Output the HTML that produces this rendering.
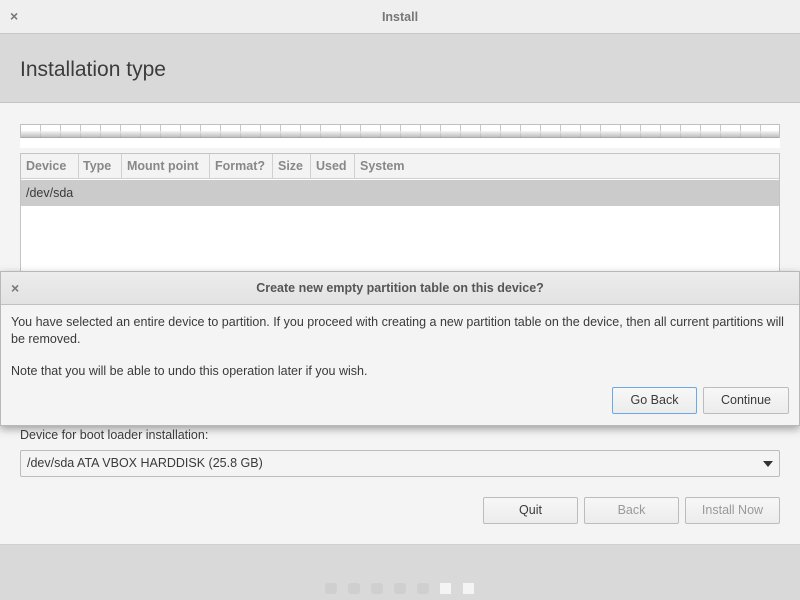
<!DOCTYPE html>
<html><head><style>
*{margin:0;padding:0;box-sizing:border-box}
body{width:800px;height:600px;overflow:hidden;background:#f4f4f4;font-family:"Liberation Sans",sans-serif;font-size:12px;color:#3a3a3a;position:relative}
.abs{position:absolute}
.btn{position:absolute;height:27px;border:1px solid #bcbcbc;border-radius:2px;background:linear-gradient(#f7f7f7,#ececec);text-align:center;line-height:25px;font-size:12.5px}
</style></head><body>
<div class="abs" style="left:0;top:0;width:800px;height:34px;background:#efefef;border-bottom:1px solid #c8c8c8"></div>
<div class="abs" style="left:10px;top:8px;font-size:14px;color:#777;font-weight:bold">×</div>
<div class="abs" style="left:0;top:10px;width:800px;text-align:center;font-weight:bold;color:#777;font-size:12.5px">Install</div>
<div class="abs" style="left:0;top:34px;width:800px;height:69px;background:#d9d9d9;border-bottom:1px solid #c4c4c4"></div>
<div class="abs" style="left:20px;top:58px;font-size:21px;color:#3c3c3c">Installation type</div>
<div class="abs" style="left:20px;top:124px;width:760px;height:14px;border:1px solid #c0c0c0;background:repeating-linear-gradient(90deg,#fff 0,#fff 19px,#c8c8c8 19px,#c8c8c8 20px)"></div>
<div class="abs" style="left:21px;top:131px;width:758px;height:7px;background:linear-gradient(#f0f0f0,#9a9a9a);opacity:.7"></div>
<div class="abs" style="left:20px;top:138px;width:760px;height:10px;background:#fff"></div>
<div class="abs" style="left:20px;top:153px;width:760px;height:120px;border:1px solid #c4c4c4;background:#fff"></div>
<div class="abs" style="left:21px;top:154px;width:758px;height:25px;background:#f3f3f3;border-bottom:1px solid #d0d0d0;font-weight:bold;color:#888;font-size:12.5px">
<span class="abs" style="left:5px;top:5px">Device</span>
<span class="abs" style="left:57px;top:0;height:25px;border-left:1px solid #d0d0d0"></span>
<span class="abs" style="left:62px;top:5px">Type</span>
<span class="abs" style="left:100px;top:0;height:25px;border-left:1px solid #d0d0d0"></span>
<span class="abs" style="left:106px;top:5px">Mount point</span>
<span class="abs" style="left:188px;top:0;height:25px;border-left:1px solid #d0d0d0"></span>
<span class="abs" style="left:194px;top:5px">Format?</span>
<span class="abs" style="left:251px;top:0;height:25px;border-left:1px solid #d0d0d0"></span>
<span class="abs" style="left:257px;top:5px">Size</span>
<span class="abs" style="left:289px;top:0;height:25px;border-left:1px solid #d0d0d0"></span>
<span class="abs" style="left:295px;top:5px">Used</span>
<span class="abs" style="left:333px;top:0;height:25px;border-left:1px solid #d0d0d0"></span>
<span class="abs" style="left:339px;top:5px">System</span>
</div>
<div class="abs" style="left:21px;top:180px;width:758px;height:26px;background:#cbcbcb;padding:6px 5px;font-size:12.5px">/dev/sda</div>

<div class="abs" style="left:0;top:271px;width:800px;height:155px;background:#f4f4f4;border:1px solid #b8b8b8;box-shadow:0 3px 8px rgba(0,0,0,.35)">
 <div class="abs" style="left:0;top:0;width:798px;height:33px;background:linear-gradient(#ececec,#e2e2e2);border-bottom:1px solid #c0c0c0"></div>
 <div class="abs" style="left:10px;top:8px;font-size:14px;color:#777;font-weight:bold">×</div>
 <div class="abs" style="left:0;top:9px;width:798px;text-align:center;font-weight:bold;color:#555;font-size:12.5px">Create new empty partition table on this device?</div>
 <div class="abs" style="left:10px;top:42px;width:785px;font-size:12.5px;line-height:17px;color:#3a3a3a">You have selected an entire device to partition. If you proceed with creating a new partition table on the device, then all current partitions will be removed.</div>
 <div class="abs" style="left:10px;top:92px;font-size:12.5px">Note that you will be able to undo this operation later if you wish.</div>
 <div class="btn" style="left:611px;top:115px;width:85px;border-color:#6aa8e6">Go Back</div>
 <div class="btn" style="left:702px;top:115px;width:86px">Continue</div>
</div>

<div class="abs" style="left:20px;top:428px;font-size:12.5px">Device for boot loader installation:</div>
<div class="abs" style="left:20px;top:450px;width:760px;height:27px;border:1px solid #bcbcbc;border-radius:2px;background:#f4f4f4;padding:5px 6px;font-size:12.5px">/dev/sda ATA VBOX HARDDISK (25.8 GB)</div>
<div class="abs" style="left:763px;top:461px;width:0;height:0;border-left:5px solid transparent;border-right:5px solid transparent;border-top:6px solid #333"></div>
<div class="btn" style="left:483px;top:497px;width:95px">Quit</div>
<div class="btn" style="left:584px;top:497px;width:95px;color:#999">Back</div>
<div class="btn" style="left:685px;top:497px;width:95px;color:#999">Install Now</div>
<div class="abs" style="left:0;top:544px;width:800px;height:56px;background:#d9d9d9;border-top:1px solid #cfcfcf"></div>
<div class="abs" style="left:325px;top:583px;width:12px;height:11px;border-radius:3px;background:#cfcfcf"></div>
<div class="abs" style="left:348px;top:583px;width:12px;height:11px;border-radius:3px;background:#cfcfcf"></div>
<div class="abs" style="left:371px;top:583px;width:12px;height:11px;border-radius:3px;background:#cfcfcf"></div>
<div class="abs" style="left:394px;top:583px;width:12px;height:11px;border-radius:3px;background:#cfcfcf"></div>
<div class="abs" style="left:417px;top:583px;width:12px;height:11px;border-radius:3px;background:#cfcfcf"></div>
<div class="abs" style="left:440px;top:583px;width:11px;height:11px;background:#f4f4f4"></div>
<div class="abs" style="left:463px;top:583px;width:11px;height:11px;background:#f4f4f4"></div>
</body></html>
